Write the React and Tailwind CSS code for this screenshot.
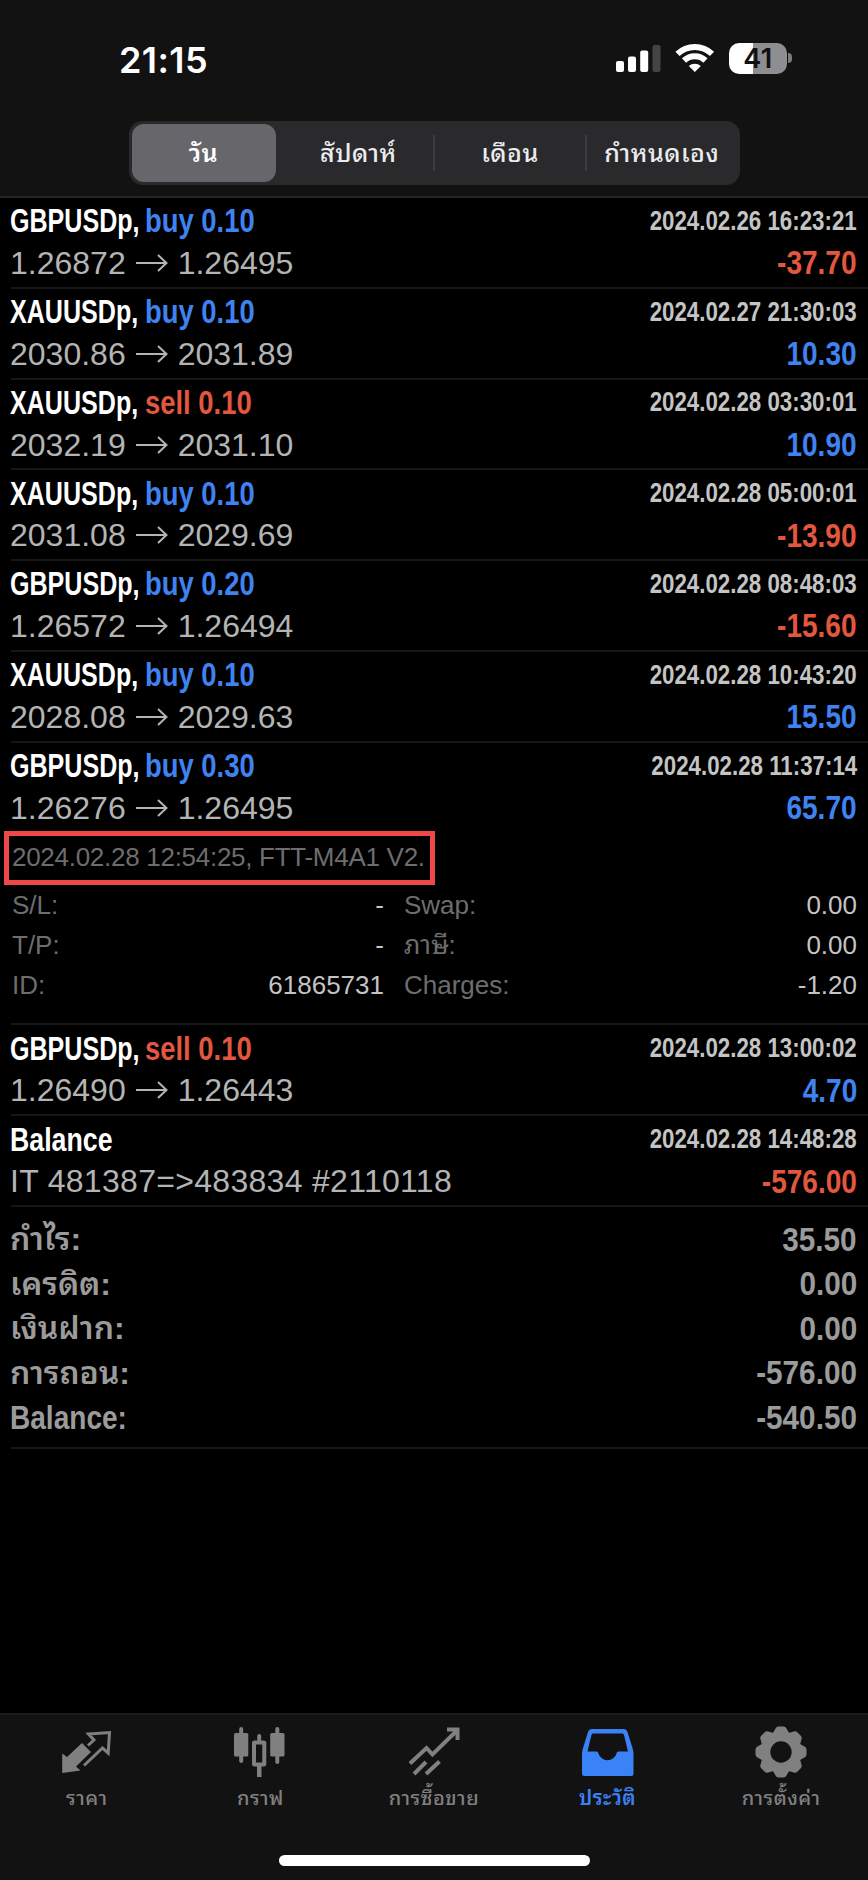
import React from "react";
import { clsx } from "clsx";

const deals = [
  { symbol: "GBPUSDp,", side: "buy", volume: "0.10", open: "1.26872", close: "1.26495", time: "2024.02.26 16:23:21", profit: "-37.70" },
  { symbol: "XAUUSDp,", side: "buy", volume: "0.10", open: "2030.86", close: "2031.89", time: "2024.02.27 21:30:03", profit: "10.30" },
  { symbol: "XAUUSDp,", side: "sell", volume: "0.10", open: "2032.19", close: "2031.10", time: "2024.02.28 03:30:01", profit: "10.90" },
  { symbol: "XAUUSDp,", side: "buy", volume: "0.10", open: "2031.08", close: "2029.69", time: "2024.02.28 05:00:01", profit: "-13.90" },
  { symbol: "GBPUSDp,", side: "buy", volume: "0.20", open: "1.26572", close: "1.26494", time: "2024.02.28 08:48:03", profit: "-15.60" },
  { symbol: "XAUUSDp,", side: "buy", volume: "0.10", open: "2028.08", close: "2029.63", time: "2024.02.28 10:43:20", profit: "15.50" },
  {
    symbol: "GBPUSDp,", side: "buy", volume: "0.30", open: "1.26276", close: "1.26495", time: "2024.02.28 11:37:14", profit: "65.70",
    details: {
      comment: "2024.02.28 12:54:25, FTT-M4A1 V2.",
      rows: [
        ["S/L:", "-", "Swap:", "0.00"],
        ["T/P:", "-", "ภาษี:", "0.00"],
        ["ID:", "61865731", "Charges:", "-1.20"],
      ],
    },
  },
  { symbol: "GBPUSDp,", side: "sell", volume: "0.10", open: "1.26490", close: "1.26443", time: "2024.02.28 13:00:02", profit: "4.70" },
  { symbol: "Balance", note: "IT 481387=>483834 #2110118", time: "2024.02.28 14:48:28", profit: "-576.00" },
];

const summary = [
  ["กำไร:", "35.50"],
  ["เครดิต:", "0.00"],
  ["เงินฝาก:", "0.00"],
  ["การถอน:", "-576.00"],
  ["Balance:", "-540.50"],
];

const periods = ["วัน", "สัปดาห์", "เดือน", "กำหนดเอง"];

const StatusBar = () => (
  <div className="flex h-[121px] items-start justify-between pt-[40px] pr-[76px] pl-[119px]">
    <span className="font-['Inter'] text-[36px] leading-10 font-semibold tracking-[0.400px] text-white">21:15</span>
    <div className="flex items-center pt-[2px]">
      <svg width="46" height="32" viewBox="0 0 46 32" fill="#fff">
        <rect x="0" y="19" width="8" height="11" rx="2" />
        <rect x="12" y="14.500" width="8" height="15.500" rx="2" />
        <rect x="24.200" y="8.500" width="8" height="21.500" rx="2" />
        <rect x="36.500" y="3" width="8" height="27" rx="2" fill="#444446" />
      </svg>
      <svg className="ml-[13px]" width="40" height="32" viewBox="0 0 40 32" fill="none" stroke="#fff" strokeWidth="6">
        <path d="M2.500 11.800a25 25 0 0 1 34.500 0" />
        <path d="M9 18.500a15.600 15.600 0 0 1 21.500 0" />
        <path d="M19.800 30l-6-6a9 9 0 0 1 12 0z" fill="#fff" stroke="none" />
      </svg>
      <div className="ml-[14px] flex h-[31px] w-[58px] items-center justify-center rounded-[10px] bg-linear-to-r from-white from-41% to-[#8e8e90] to-41% pt-[2px] font-['Inter'] text-[27px] font-semibold tracking-[0.500px] text-[#111]">
        41
      </div>
      <div className="ml-[1px] h-[10px] w-[4px] rounded-r-full bg-[#7c7c7e]" />
    </div>
  </div>
);

const PeriodTabs = () => (
  <div className="mx-auto flex h-[64px] w-[611px] items-center rounded-[14px] bg-[#2a2a2d] p-[3px]">
    {periods.map((period, i) => (
      <React.Fragment key={period}>
        {i > 1 && <div className="h-[36px] w-[2px] bg-[#3d3d41]" />}
        <div
          className={clsx(
            "flex h-[58px] items-center justify-center text-[25px] leading-none tracking-[0.500px]",
            i === 0
              ? "mr-[8px] w-[144px] rounded-xl bg-[#67666b] font-semibold text-white"
              : "flex-1 font-medium text-[#ececee]"
          )}
        >
          {period}
        </div>
      </React.Fragment>
    ))}
  </div>
);

const DealDetails = ({ comment, rows }) => (
  <div className="pt-[2px] text-[26px]">
    <div className="-ml-[7px] flex h-[54px] w-[431px] items-center border-[5px] border-[#ef4848] pl-[3px] tracking-[-0.280px] whitespace-nowrap text-[#6d6d6d]">
      {comment}
    </div>
    {rows.map(([leftLabel, left, rightLabel, right]) => (
      <div key={leftLabel} className="flex h-[40.200px] items-center leading-10 text-[#c4c4c4]">
        <span className="w-[120px] pl-[1px] text-[#6d6d6d]">{leftLabel}</span>
        <span className="w-[253px] text-right">{left}</span>
        <span className="ml-[20px] text-[#6d6d6d]">{rightLabel}</span>
        <span className="ml-auto">{right}</span>
      </div>
    ))}
  </div>
);

const DealRow = ({ deal }) => (
  <div
    className={clsx(
      "ml-[11px] border-b-2 border-[#161617] pr-[11px]",
      deal.details ? "h-[282.700px]" : "h-[90.800px]"
    )}
  >
    <div className="-ml-px flex h-[44px] items-center pt-[2px] font-bold whitespace-nowrap">
      <span
        className={clsx(
          "w-[136px] origin-left text-[33px] text-white",
          deal.side ? "scale-x-[0.760]" : "scale-x-[0.810]"
        )}
      >
        {deal.symbol}
      </span>
      {deal.side && (
        <span
          className={clsx(
            "-ml-px origin-left scale-x-[0.830] text-[33px]",
            deal.side === "buy" ? "text-[#3f82f0]" : "text-[#e2573f]"
          )}
        >
          {deal.side} {deal.volume}
        </span>
      )}
      <span className="ml-auto origin-right scale-x-[0.826] text-[27px] text-[#c4c4c4]">{deal.time}</span>
    </div>
    <div className="-ml-px flex h-[42px] items-center justify-between whitespace-nowrap">
      <span className="flex items-center text-[32px] text-[#b4b4b4]">
        {deal.note ? (
          <span className="tracking-[0.300px]">{deal.note}</span>
        ) : (
          <>
            {deal.open}
            <svg className="mx-[10px]" width="32" height="20" viewBox="0 0 32 20" fill="none" stroke="currentColor" strokeWidth="2">
              <path d="M0 10h30M22 2l8.500 8l-8.500 8" />
            </svg>
            {deal.close}
          </>
        )}
      </span>
      <span
        className={clsx(
          "origin-right scale-x-[0.850] text-[33px] font-bold",
          deal.profit.startsWith("-") ? "text-[#e2573f]" : "text-[#3f82f0]"
        )}
      >
        {deal.profit}
      </span>
    </div>
    {deal.details && <DealDetails {...deal.details} />}
  </div>
);

const gearTeeth = [0, 45, 90, 135, 180, 225, 270, 315];

const tabs = [
  {
    label: "ราคา",
    icon: (
      <>
        <path d="M1.200 47V27.500L6 31L21 17L30 26L15 40.500L19.500 44.500z" fill="currentColor" />
        <path d="M27 19.500L33 14L27.500 8L48.500 6.500L47.200 27L41.500 22L23 39.500" fill="none" stroke="currentColor" strokeWidth="3" />
      </>
    ),
  },
  {
    label: "กราฟ",
    icon: (
      <g fill="currentColor">
        <rect x="0" y="7" width="14.300" height="23.500" rx="1.500" />
        <rect x="5.200" y="1" width="4" height="36" rx="2" />
        <rect x="20" y="16.500" width="10.300" height="22" rx="0.500" fill="none" stroke="currentColor" strokeWidth="4" />
        <rect x="23.200" y="8" width="4" height="8" rx="2" />
        <path d="M23 40h4.500v11H23z" />
        <rect x="36.200" y="7" width="14.300" height="23.500" rx="1.500" />
        <rect x="41.300" y="1" width="4" height="37" rx="2" />
      </g>
    ),
  },
  {
    label: "การซื้อขาย",
    icon: (
      <path
        d="M2 37.500L18.500 22L24.500 28.500L48.500 5M39 3.500H49.500V14M6 48L18 36M18 48L31.500 35.500"
        fill="none"
        stroke="currentColor"
        strokeWidth="4"
      />
    ),
  },
  {
    label: "ประวัติ",
    active: true,
    icon: (
      <path
        fillRule="evenodd"
        fill="currentColor"
        d="M10 3H41.500Q44.500 3 45.500 6L50.500 22Q51.500 25 51.500 28V47.500Q51.500 50 49 50H2.500Q0 50 0 47.500V28Q0 25 1 22L6 6Q7 3 10 3zM11 7.500Q9.800 7.500 9.400 9L5.500 25.500H14.500Q16.200 25.500 16.500 27.500A9.300 9 0 0 0 34.500 27.500Q34.800 25.500 36.500 25.500H46L42 9Q41.700 7.500 40.500 7.500z"
      />
    ),
  },
  {
    label: "การตั้งค่า",
    icon: (
      <g fill="currentColor">
        <circle cx="26" cy="26" r="21" />
        {gearTeeth.map((angle) => (
          <path key={angle} d="M18 7L20.500 2.500Q21.500 0.500 23.500 0.500H28.500Q30.500 0.500 31.500 2.500L34 7z" transform={`rotate(${angle} 26 26)`} />
        ))}
        <circle cx="26" cy="26" r="10.700" fill="#121212" />
      </g>
    ),
  },
];

const TabBar = () => (
  <div className="mt-auto h-[167px] border-t-2 border-[#1c1c1c] bg-[#121212]">
    <div className="flex pt-[11px]">
      {tabs.map((tab) => (
        <div
          key={tab.label}
          className={clsx("flex flex-1 flex-col items-center", tab.active ? "text-[#3b82f6]" : "text-[#808080]")}
        >
          <svg width="52" height="52" viewBox="0 0 52 52">{tab.icon}</svg>
          <span
            className={clsx(
              "mt-[6px] text-[20px] leading-7 tracking-[0.500px]",
              tab.active ? "font-semibold" : "font-medium"
            )}
          >
            {tab.label}
          </span>
        </div>
      ))}
    </div>
    <div className="mx-auto mt-[43px] h-[11px] w-[311px] rounded-full bg-white" />
  </div>
);

const App = () => {
  return (
    <div className="flex h-[1880px] w-[868px] flex-col overflow-hidden bg-black font-['Liberation_Sans','Noto_Sans_Thai_Looped','Noto_Sans_Thai',sans-serif]">
      <div className="h-[198px] border-b-2 border-[#262626] bg-[#121212]">
        <StatusBar />
        <PeriodTabs />
      </div>
      {deals.map((deal) => (
        <DealRow key={deal.time} deal={deal} />
      ))}
      <div className="ml-[11px] h-[242px] border-b-2 border-[#161617] pt-[10px] pr-[11px] text-[33px] font-bold text-[#9b9b9b]">
        {summary.map(([label, value]) => (
          <div key={label} className="-ml-px flex h-[44.500px] items-center justify-between leading-none">
            <span
              className={clsx(
                "origin-left",
                label === "Balance:" ? "scale-x-[0.850]" : "text-[32px] font-semibold"
              )}
            >
              {label}
            </span>
            <span className="origin-right scale-x-[0.900]">{value}</span>
          </div>
        ))}
      </div>
      <TabBar />
    </div>
  );
};

export default App;
